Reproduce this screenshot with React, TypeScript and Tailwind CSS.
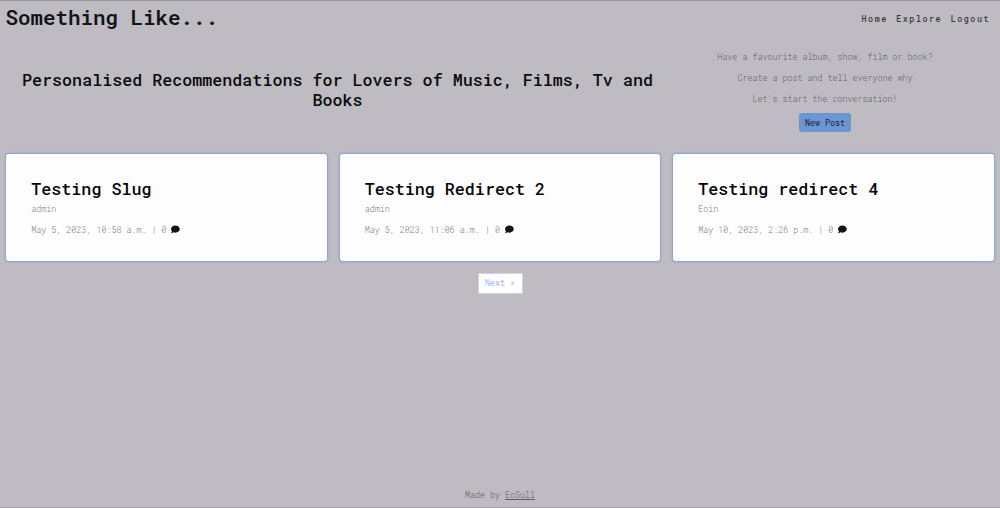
import React from "react";

const posts = [
  { title: "Testing Slug", author: "admin", date: "May 5, 2023, 10:58 a.m." },
  { title: "Testing Redirect 2", author: "admin", date: "May 5, 2023, 11:06 a.m." },
  { title: "Testing redirect 4", author: "Eoin", date: "May 10, 2023, 2:26 p.m." },
];

function CommentIcon() {
  return (
    <svg viewBox="0 0 512 512" className="ml-[4.6px] h-[8.8px] w-[8.8px] shrink-0 overflow-visible fill-[#111418]">
      <path d="M256 32C114.600 32 0 125.100 0 240c0 49.600 21.400 95 57 130.700C44.500 421.100 2.700 466 2.200 466.500c-2.200 2.300-2.800 5.700-1.500 8.700S4.800 480 8 480c66.300 0 116-31.800 140.600-51.400 32.700 12.300 69 19.400 107.400 19.400 141.400 0 256-93.100 256-208S397.400 32 256 32z" />
    </svg>
  );
}

export default function App() {
  return (
    <div className="flex h-[508px] flex-col border-t border-[#9b98a0] bg-[#bfbbc2] font-['Roboto_Mono','Liberation_Mono',monospace] text-[8.35px] leading-[12.5px] font-light text-[#646268]">
      <header className="flex h-[37px] items-center justify-between pr-[10px] pl-[5.5px]">
        <h1 className="-mt-1 text-[20.85px] leading-[25px] font-semibold whitespace-nowrap text-[#111418]">
          Something Like...
        </h1>
        <nav className="flex gap-[8.5px] font-medium tracking-[1.55px] text-[#3a393e]">
          <a>Home</a>
          <a>Explore</a>
          <a>Logout</a>
        </nav>
      </header>

      <section className="flex h-[109px]">
        <h2 className="mt-[31.5px] w-[675px] px-[6px] text-center text-[16.69px] leading-5 font-medium text-[#090b0d]">
          Personalised Recommendations for Lovers of Music, Films, Tv and Books
        </h2>
        <div className="flex w-[300px] flex-col items-center gap-[8.4px] pt-[13px]">
          <p>Have a favourite album, show, film or book?</p>
          <p>Create a post and tell everyone why</p>
          <p>Let's start the conversation!</p>
          <button className="-mt-[0.7px] h-[19px] w-[52px] shrink-0 rounded-[3px] bg-[#6b96d1] pt-px font-normal text-[#172238]">
            New Post
          </button>
        </div>
      </section>

      <main className="mt-[6.5px] grid grid-cols-3 gap-[12.9px] px-[6.3px]">
        {posts.map((post) => (
          <article
            key={post.title}
            className="h-[107.5px] rounded-[3px] bg-[#fdfdfd] pt-[25px] pl-[25px] text-[#7c7c7e] shadow-[0_0_2px_1px_#7ea1d4]"
          >
            <h2 className="text-[16.69px] leading-5 font-medium text-[#050607]">
              {post.title}
            </h2>
            <p className="mt-[4.5px]">{post.author}</p>
            <p className="mt-[8px] flex items-center whitespace-pre">
              {post.date} | 0<CommentIcon />
            </p>
          </article>
        ))}
      </main>

      <a className="mt-[13px] flex h-[19px] w-[43px] items-center justify-center self-center bg-white whitespace-pre text-[#7089fb] outline outline-[#d5d3d8]">
        Next »
      </a>

      <footer className="mt-auto border-b border-[#a5a2aa] pb-[6px] text-center text-[#5e5c62]">
        Made by <a className="underline">EoSull</a>
      </footer>
    </div>
  );
}
